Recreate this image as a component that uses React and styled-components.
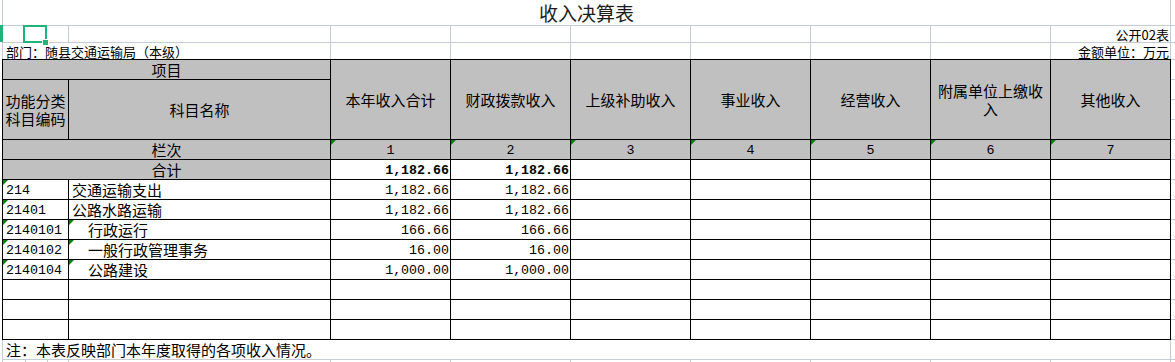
import React from 'react';
import styled, { createGlobalStyle } from 'styled-components';

const GRID = '#c6cbd8';
const SHADE = '#c0c0c0';
const PICK = '#1fb579';
const CJK = '"Noto Sans CJK SC", "Noto Sans", sans-serif';
const NUM = '"Liberation Mono", "Noto Sans CJK SC", monospace';

const GlobalStyle = createGlobalStyle`
  body {
    margin: 0;
    background: #fff;
    font-family: ${CJK};
    color: #000;
  }
`;

const Page = styled.div`
  position: relative;
  width: 1175px;
  height: 362px;
  overflow: hidden;
`;

const Sheet = styled.div`
  margin-left: 2px;
  display: flex;
  flex-direction: column;
`;

// 标题行
const TitleRow = styled.div`
  display: grid;
  grid-template-columns: 1167px 1fr;
  gap: 1px;
  padding: 0 0 1px 1px;
  background: ${GRID};
`;

const Blank = styled.div`
  background: #fff;
  height: ${p => p.$h || 'auto'};
`;

const TitleText = styled.div`
  background: #fff;
  height: 25px;
  display: flex;
  align-items: center;
  justify-content: center;
  font-size: 19px;
  line-height: 22px;
  padding-top: 1px;
  box-sizing: border-box;
  color: #1c1c1c;
`;

// 公开02表 / 部门 两行
const InfoGrid = styled.div`
  display: grid;
  grid-template-columns: 65px 261px repeat(7, 119px) 1fr;
  grid-template-rows: 16px 16px;
  gap: 1px;
  padding-left: 1px;
  background: ${GRID};
`;

const InfoCell = styled.div`
  background: #fff;
  grid-column: ${p => p.$span ? `span ${p.$span}` : 'auto'};
  display: flex;
  align-items: flex-end;
  justify-content: ${p => p.$right ? 'flex-end' : 'flex-start'};
  padding: 0 ${p => p.$right ? '1px' : '0'} 0 ${p => p.$right ? '0' : '3px'};
  font-size: 13px;
  line-height: 15px;
  white-space: nowrap;
  overflow: visible;
`;

const TableRow = styled.div`
  display: flex;
`;

const TableGrid = styled.div`
  display: grid;
  grid-template-columns: 65px 261px repeat(7, 119px);
  grid-template-rows: 19px 59px 19px repeat(9, 19px);
  gap: 1px;
  padding: 1px;
  background: #000;
`;

const Spill = styled.div`
  flex: 1;
  height: 281px;
  background: repeating-linear-gradient(
    to bottom,
    ${GRID} 0 1px,
    #fff 1px 20px
  );
`;

const Cell = styled.div`
  position: relative;
  box-sizing: border-box;
  background: ${p => p.$shade ? SHADE : '#fff'};
  grid-column: ${p => p.$col || 'auto'};
  grid-row: ${p => p.$row || 'auto'};
  display: flex;
  align-items: center;
  justify-content: ${p => p.$align === 'left' ? 'flex-start' : p.$align === 'right' ? 'flex-end' : 'center'};
  text-align: ${p => p.$align || 'center'};
  padding: ${p => p.$num ? '3px' : '1px'} ${p => p.$align === 'right' ? '1px' : '0'} 0 ${p => p.$indent ? '19px' : p.$align === 'left' ? '3px' : '0'};
  font-family: ${p => p.$num ? NUM : CJK};
  font-size: ${p => p.$num ? '13.3px' : '15px'};
  font-weight: ${p => p.$bold ? 700 : 400};
  line-height: 16px;
  white-space: nowrap;
`;

const HeadCell = styled(Cell)`
  white-space: normal;
  padding: 1px 1px 0;
  line-height: 18px;
`;

const Marker = styled.span`
  position: absolute;
  top: 0;
  left: 0;
  width: 0;
  height: 0;
  border-top: 5px solid #0b7d0b;
  border-right: 5px solid transparent;
`;

const NoteRow = styled.div`
  display: grid;
  grid-template-columns: 1167px 1fr;
  gap: 1px;
  padding: 0 0 1px 1px;
  background: ${GRID};
`;

const NoteText = styled.div`
  background: #fff;
  height: 19px;
  display: flex;
  align-items: center;
  padding-left: 3px;
  font-size: 15px;
  line-height: 17px;
`;

const StubRow = styled.div`
  display: grid;
  grid-template-columns: 22px 21px 20px 261px repeat(7, 119px) 1fr;
  gap: 1px;
  padding-left: 1px;
  background: ${GRID};
`;

const Selection = styled.div`
  position: absolute;
  left: 23px;
  top: 25px;
  width: 24px;
  height: 18px;
  box-sizing: border-box;
  border: 2px solid ${PICK};
`;

const Handle = styled.div`
  position: absolute;
  left: 43px;
  top: 40px;
  width: 5px;
  height: 5px;
  background: ${PICK};
  outline: 1px solid #fff;
`;

const RowMark = styled.div`
  position: absolute;
  left: 0;
  top: 25px;
  width: 3px;
  height: 17px;
  background: ${PICK};
`;

const heads = ['本年收入合计', '财政拨款收入', '上级补助收入', '事业收入', '经营收入', '附属单位上缴收入', '其他收入'];

const rows = [
  { code: '214', name: '交通运输支出', v: ['1,182.66', '1,182.66'] },
  { code: '21401', name: '公路水路运输', v: ['1,182.66', '1,182.66'] },
  { code: '2140101', name: '行政运行', indent: true, v: ['166.66', '166.66'] },
  { code: '2140102', name: '一般行政管理事务', indent: true, v: ['16.00', '16.00'] },
  { code: '2140104', name: '公路建设', indent: true, v: ['1,000.00', '1,000.00'] },
  { code: '', name: '', v: [] },
  { code: '', name: '', v: [] },
  { code: '', name: '', v: [] },
];

const seven = [0, 1, 2, 3, 4, 5, 6];

export default function App() {
  return (
    <Page>
      <GlobalStyle />
      <Sheet>
        <TitleRow>
          <TitleText>收入决算表</TitleText>
          <Blank />
        </TitleRow>

        <InfoGrid>
          {[0, 1, 2, 3, 4, 5, 6, 7].map(i => <InfoCell key={i} />)}
          <InfoCell $right>公开02表</InfoCell>
          <Blank />
          <InfoCell $span={2}>部门：随县交通运输局（本级）</InfoCell>
          {[0, 1, 2, 3, 4, 5].map(i => <InfoCell key={i} />)}
          <InfoCell $right>金额单位：万元</InfoCell>
          <Blank />
        </InfoGrid>

        <TableRow>
          <TableGrid>
            <HeadCell $shade $col="1 / 3" $row="1">项目</HeadCell>
            {heads.map((h, i) => (
              <HeadCell key={h} $shade $col={`${i + 3}`} $row="1 / 3">{h}</HeadCell>
            ))}
            <HeadCell $shade $col="1" $row="2">功能分类<br />科目编码</HeadCell>
            <HeadCell $shade $col="2" $row="2">科目名称</HeadCell>

            <Cell $shade $col="1 / 3">栏次</Cell>
            {seven.map(i => (
              <Cell key={i} $shade $num>
                <Marker />
                {i + 1}
              </Cell>
            ))}

            <Cell $shade $col="1 / 3">合计</Cell>
            {seven.map(i => (
              <Cell key={i} $num $bold $align="right">{i < 2 ? '1,182.66' : ''}</Cell>
            ))}

            {rows.map((r, ri) => (
              <React.Fragment key={ri}>
                <Cell $num $align="left">
                  {r.code && <Marker />}
                  {r.code}
                </Cell>
                <Cell $align="left" $indent={r.indent}>
                  {r.indent && <Marker />}
                  {r.name}
                </Cell>
                {seven.map(i => (
                  <Cell key={i} $num $align="right">{r.v[i] || ''}</Cell>
                ))}
              </React.Fragment>
            ))}
          </TableGrid>
          <Spill />
        </TableRow>

        <NoteRow>
          <NoteText>注：本表反映部门本年度取得的各项收入情况。</NoteText>
          <Blank />
        </NoteRow>

        <StubRow>
          {[0, 1, 2, 3, 4, 5, 6, 7, 8, 9, 10, 11].map(i => <Blank key={i} $h="2px" />)}
        </StubRow>
      </Sheet>

      <RowMark />
      <Selection />
      <Handle />
    </Page>
  );
}
